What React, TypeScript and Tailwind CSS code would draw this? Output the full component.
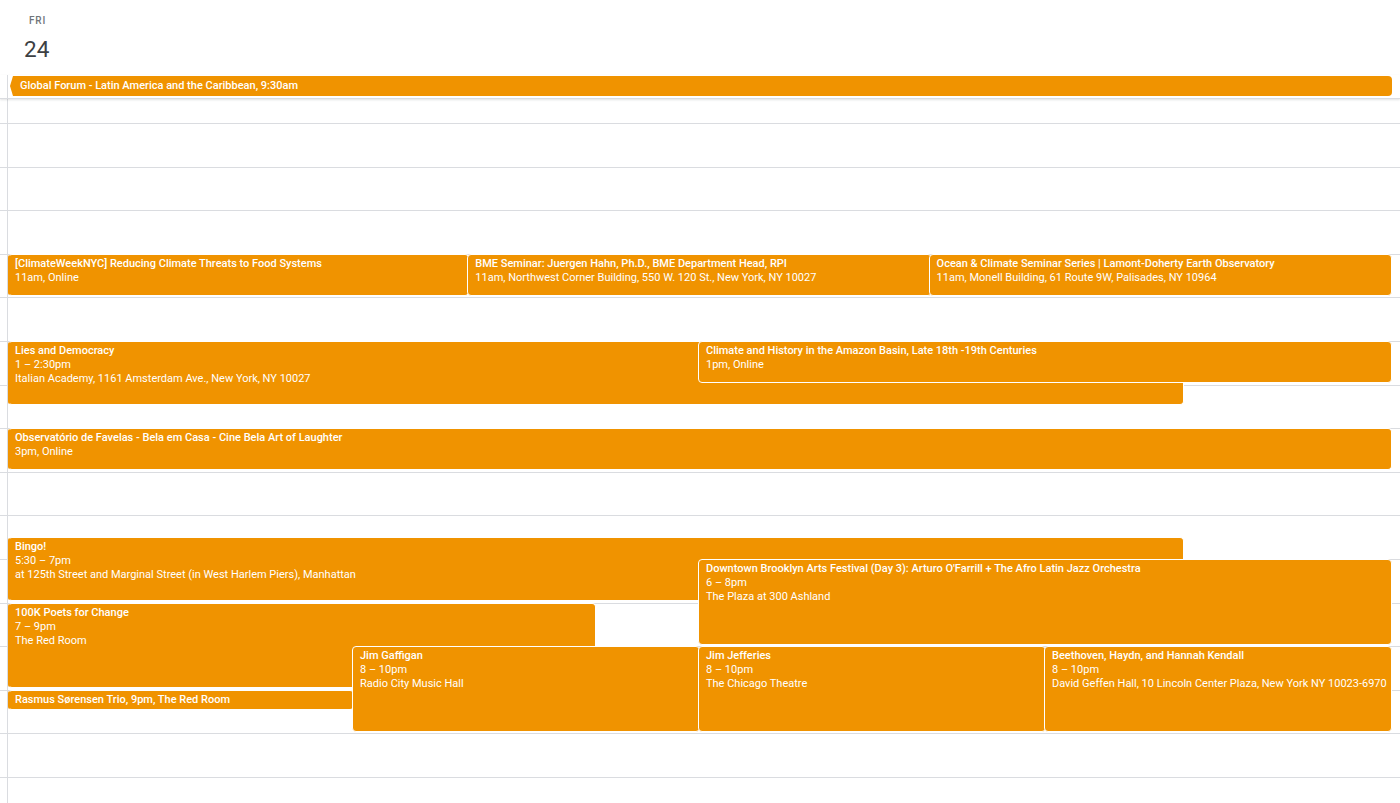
import React from 'react';

type CalEvent = {
  title: string;
  start: number;
  end: number;
  left: number;
  width: number;
  lines?: string[];
  compact?: string;
};

const HOUR = 43.6;
const FIRST_HOUR = 8;
const GRID_OFFSET = 24;

const events: CalEvent[] = [
  {
    title: '[ClimateWeekNYC] Reducing Climate Threats to Food Systems',
    start: 11,
    end: 12,
    left: 0,
    width: 33.33,
    lines: ['11am, Online'],
  },
  {
    title: 'BME Seminar: Juergen Hahn, Ph.D., BME Department Head, RPI',
    start: 11,
    end: 12,
    left: 33.33,
    width: 33.4,
    lines: ['11am, Northwest Corner Building, 550 W. 120 St., New York, NY 10027'],
  },
  {
    title: 'Ocean & Climate Seminar Series | Lamont-Doherty Earth Observatory',
    start: 11,
    end: 12,
    left: 66.66,
    width: 33.34,
    lines: ['11am, Monell Building, 61 Route 9W, Palisades, NY 10964'],
  },
  {
    title: 'Lies and Democracy',
    start: 13,
    end: 14.5,
    left: 0,
    width: 85,
    lines: ['1 – 2:30pm', 'Italian Academy, 1161 Amsterdam Ave., New York, NY 10027'],
  },
  {
    title: 'Climate and History in the Amazon Basin, Late 18th -19th Centuries',
    start: 13,
    end: 14,
    left: 50,
    width: 50,
    lines: ['1pm, Online'],
  },
  {
    title: 'Observatório de Favelas - Bela em Casa - Cine Bela Art of Laughter',
    start: 15,
    end: 16,
    left: 0,
    width: 100,
    lines: ['3pm, Online'],
  },
  {
    title: 'Bingo!',
    start: 17.5,
    end: 19,
    left: 0,
    width: 85,
    lines: ['5:30 – 7pm', 'at 125th Street and Marginal Street (in West Harlem Piers), Manhattan'],
  },
  {
    title: "Downtown Brooklyn Arts Festival (Day 3): Arturo O'Farrill + The Afro Latin Jazz Orchestra",
    start: 18,
    end: 20,
    left: 50,
    width: 50,
    lines: ['6 – 8pm', 'The Plaza at 300 Ashland'],
  },
  {
    title: '100K Poets for Change',
    start: 19,
    end: 21,
    left: 0,
    width: 42.5,
    lines: ['7 – 9pm', 'The Red Room'],
  },
  {
    title: 'Rasmus Sørensen Trio',
    start: 21,
    end: 21.5,
    left: 0,
    width: 25,
    compact: 'Rasmus Sørensen Trio, 9pm, The Red Room',
  },
  {
    title: 'Jim Gaffigan',
    start: 20,
    end: 22,
    left: 25,
    width: 25,
    lines: ['8 – 10pm', 'Radio City Music Hall'],
  },
  {
    title: 'Jim Jefferies',
    start: 20,
    end: 22,
    left: 50,
    width: 25,
    lines: ['8 – 10pm', 'The Chicago Theatre'],
  },
  {
    title: 'Beethoven, Haydn, and Hannah Kendall',
    start: 20,
    end: 22,
    left: 75,
    width: 25,
    lines: ['8 – 10pm', 'David Geffen Hall, 10 Lincoln Center Plaza, New York NY 10023-6970'],
  },
];

const hours = Array.from({ length: 16 }, (_, i) => i);

function EventBlock({ ev }: { ev: CalEvent }) {
  const top = GRID_OFFSET + (ev.start - FIRST_HOUR) * HOUR;
  const height = ev.compact ? 20 : (ev.end - ev.start) * HOUR - 1.5;
  const first = ev.left === 0;

  return (
    <div
      className={
        'absolute overflow-hidden rounded-[4px] border border-white bg-[#f09300] text-[11px] leading-[14px] text-white ' +
        (first ? 'border-l-[#f09300] pl-[6px]' : 'pl-[7px]')
      }
      style={{
        top,
        height,
        left: first ? 0 : `calc(${ev.left}% - 2px)`,
        width: first ? `${ev.width}%` : `calc(${ev.width}% + 2px)`,
      }}
    >
      {ev.compact ? (
        <div className="whitespace-nowrap pt-[2px] font-medium">{ev.compact}</div>
      ) : (
        <div className="pt-[2px]">
          <div className="whitespace-nowrap font-medium">{ev.title}</div>
          {ev.lines?.map((line) => (
            <div key={line} className="whitespace-nowrap">
              {line}
            </div>
          ))}
        </div>
      )}
    </div>
  );
}

export default function App() {
  return (
    <div className="flex h-[803px] w-[1400px] flex-col overflow-hidden bg-white font-['Roboto',sans-serif]">
      {/* day header */}
      <div className="flex h-[75px] shrink-0 flex-col pl-[24px] pt-[14px]">
        <span className="pl-[5px] text-[10px] font-medium leading-[14px] tracking-[0.8px] text-[#70757a]">
          FRI
        </span>
        <span className="pt-[7px] text-[22.5px] leading-[28px] text-[#3c4043]">24</span>
      </div>

      {/* all-day row */}
      <div className="relative z-10 flex h-[24px] shrink-0 border-b border-[#dadce0] shadow-[0_1px_2px_rgba(60,64,67,0.15)]">
        <div className="w-[7px] shrink-0" />
        <div className="flex flex-1 border-l border-[#dadce0] pl-[2px] pr-[8px] pt-[1px]">
          <div className="flex h-[20px] flex-1">
            <svg width="9" height="20" viewBox="0 0 9 20" className="shrink-0">
              <path d="M9 0 L3 0 L0 10 L3 20 L9 20 Z" fill="#f09300" />
            </svg>
            <div className="flex-1 overflow-hidden whitespace-nowrap rounded-r-[4px] bg-[#f09300] pl-[1px] text-[11px] font-medium leading-[20px] text-white">
              Global Forum - Latin America and the Caribbean, 9:30am
            </div>
          </div>
        </div>
      </div>

      {/* time grid */}
      <div className="relative flex-1">
        <div className="h-[24px]" />
        {hours.map((h) => (
          <div key={h} className="h-[43.6px] border-t border-[#dadce0]" />
        ))}
        <div className="absolute inset-y-0 left-[7px] right-[8px] border-l border-[#dadce0]">
          <div className="relative h-full">
            {events.map((ev) => (
              <EventBlock key={ev.title} ev={ev} />
            ))}
          </div>
        </div>
      </div>
    </div>
  );
}
